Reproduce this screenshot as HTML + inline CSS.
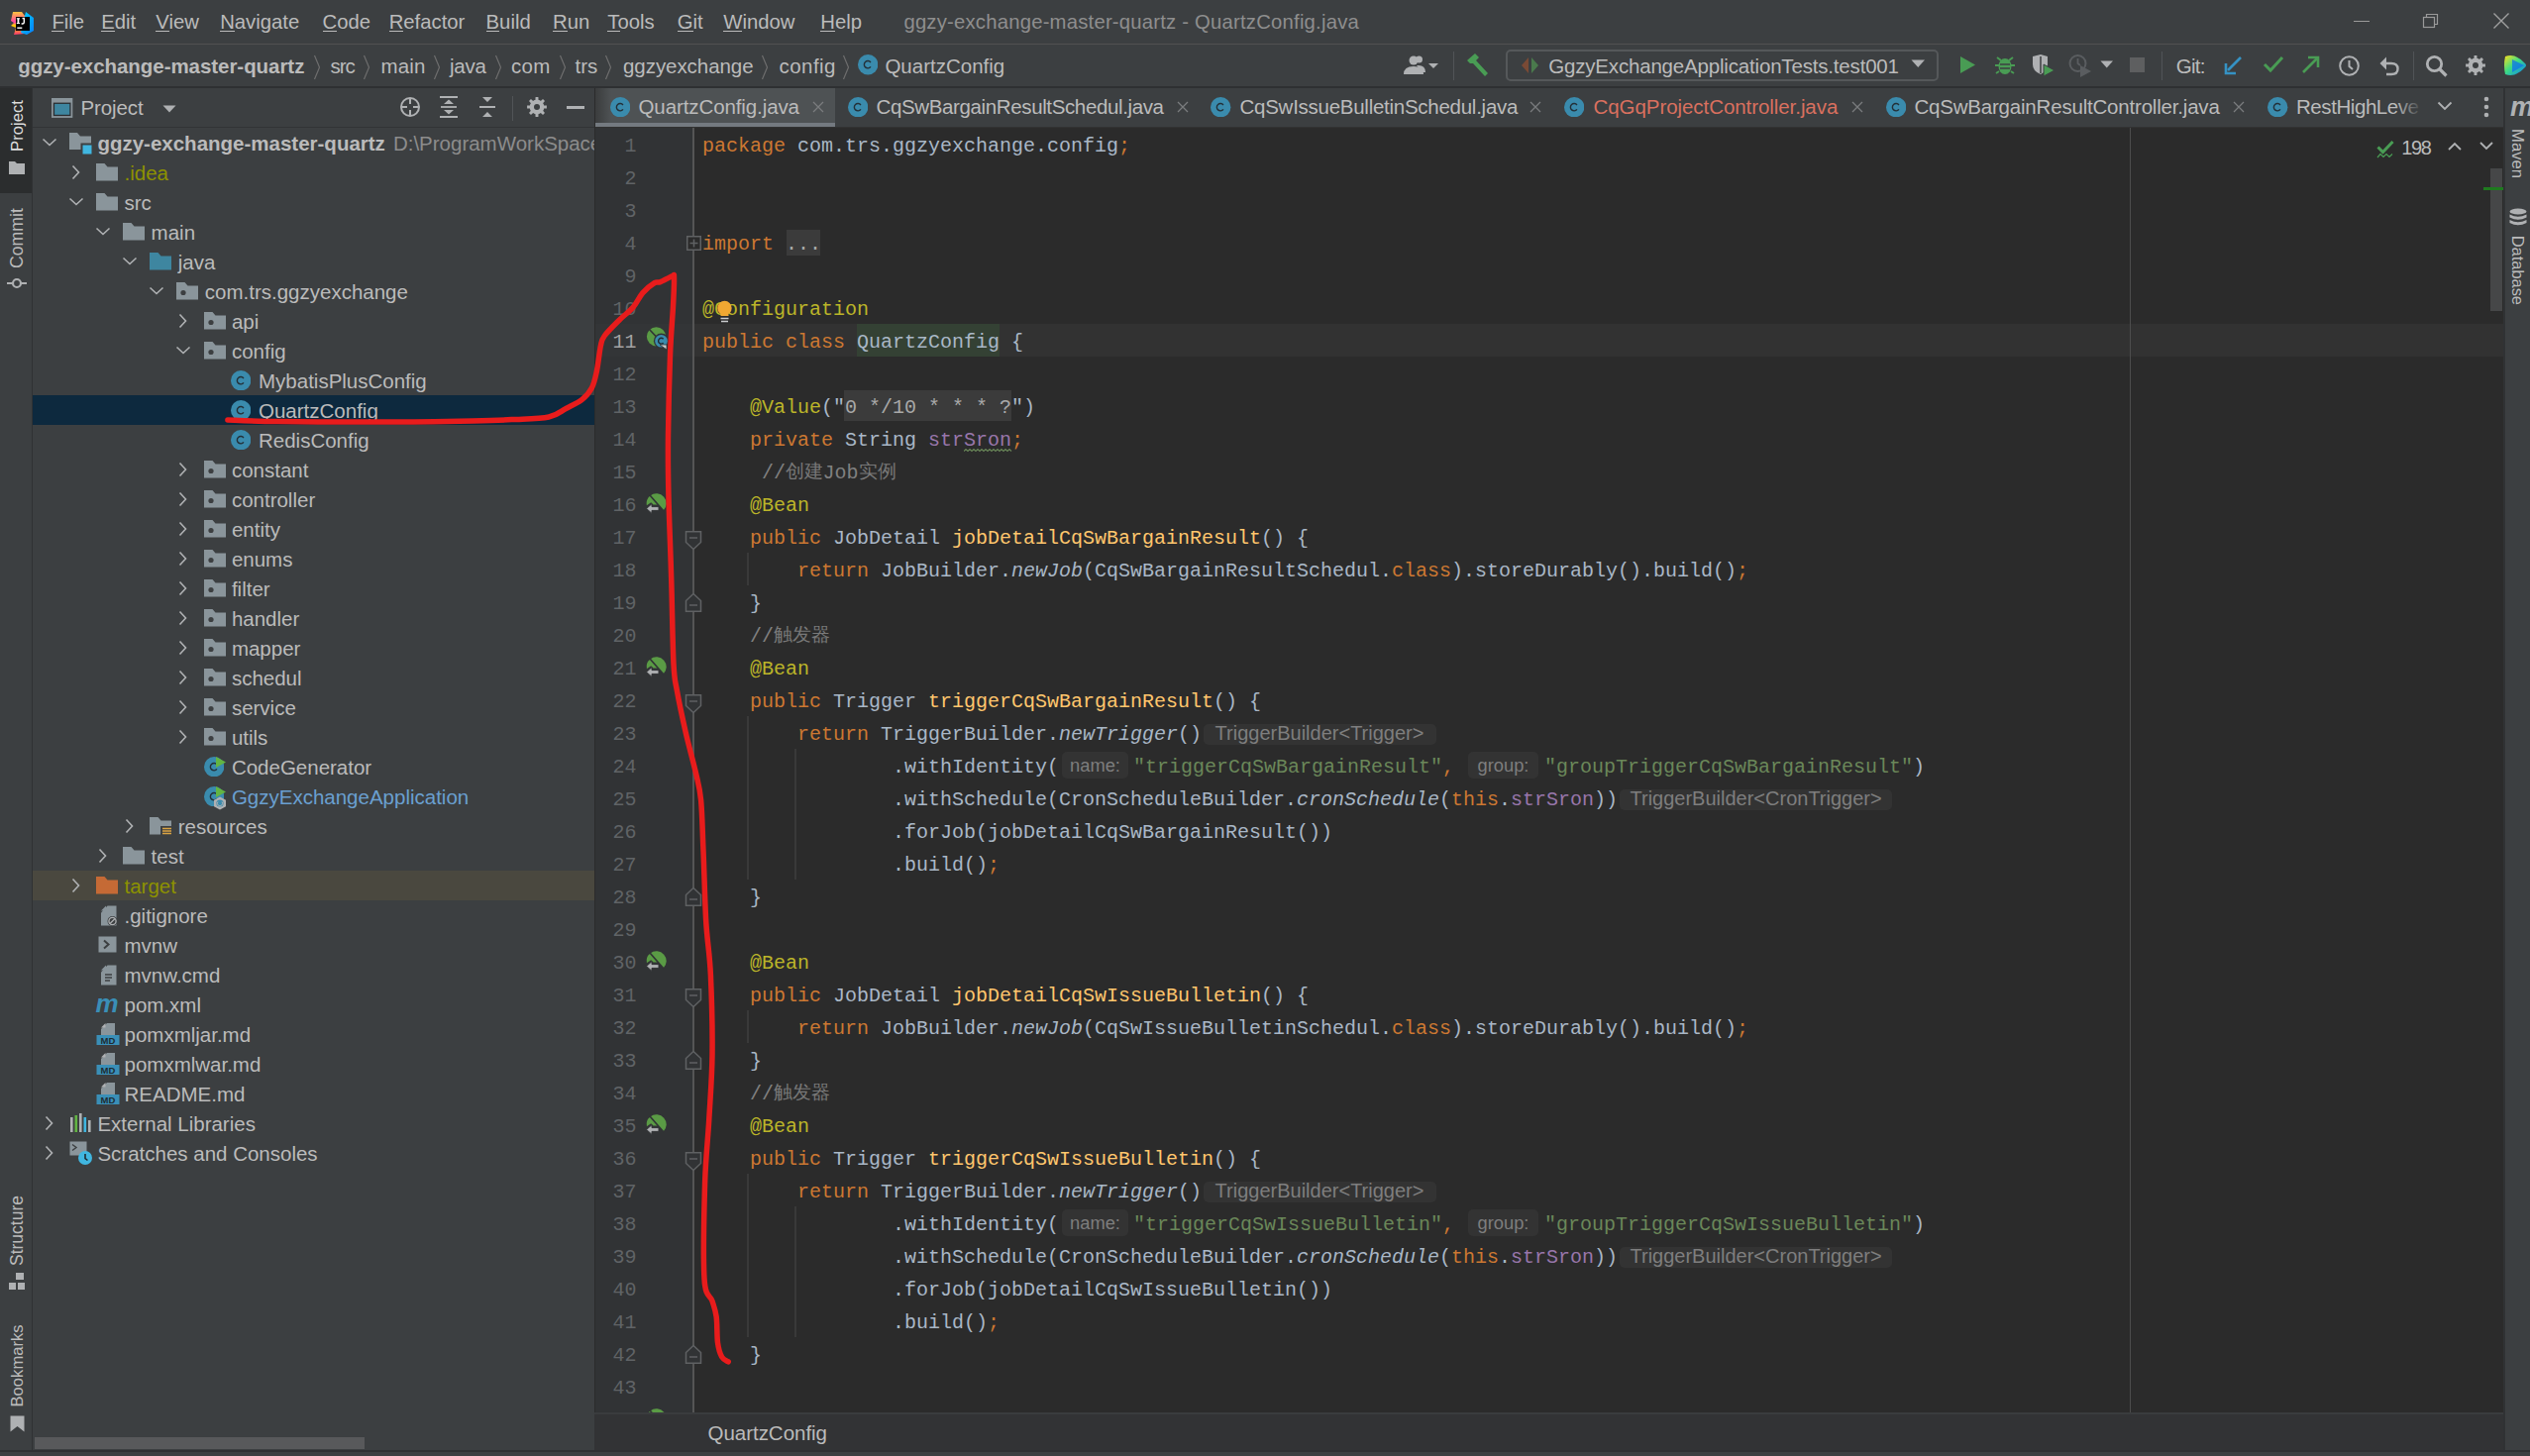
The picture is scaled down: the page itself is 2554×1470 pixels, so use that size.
<!DOCTYPE html><html><head><meta charset="utf-8"><style>
html,body{margin:0;padding:0}
body{width:2554px;height:1470px;position:relative;overflow:hidden;background:#3C3F41;font-family:"Liberation Sans",sans-serif}
.t{position:absolute;white-space:pre;line-height:1;font-family:"Liberation Sans",sans-serif}
.r{position:absolute;display:block}
.m{position:absolute;white-space:pre;line-height:1;font-family:"Liberation Mono",monospace;font-size:20px}
.m i{font-style:italic}
</style></head><body>

<div class="r" style="left:0px;top:0px;width:2554px;height:44px;background:#3C3F41;"></div>
<div class="r" style="left:0px;top:44px;width:2554px;height:1px;background:#515151;"></div>
<svg class="r" style="left:10px;top:10px" width="26" height="26" viewBox="0 0 26 26">
<defs><linearGradient id="lg1" x1="0" y1="0" x2="0" y2="1"><stop offset="0" stop-color="#FFC43D"/><stop offset="0.45" stop-color="#FF3EA5"/><stop offset="0.6" stop-color="#FFD400"/><stop offset="1" stop-color="#FF3873"/></linearGradient>
<linearGradient id="lg2" x1="0" y1="0" x2="1" y2="1"><stop offset="0" stop-color="#00D8FF"/><stop offset="1" stop-color="#087CFA"/></linearGradient></defs>
<polygon points="3,2 12,2 15,6 15,24 4,25 6,18 1,16 4,13 1,11" fill="url(#lg1)"/>
<polygon points="16,2 24,8 24,21 17,25 11,23 15,6" fill="url(#lg2)"/>
<rect x="6" y="7" width="14" height="14" fill="#000"/>
<rect x="7.5" y="8.5" width="1.8" height="5" fill="#fff"/><rect x="6.8" y="8.3" width="3.2" height="1" fill="#fff"/><rect x="6.8" y="13" width="3.2" height="1" fill="#fff"/>
<path d="M12.5 8.5 H14.3 V12.5 Q14.3 14 12.6 14 H11.6" stroke="#fff" stroke-width="1.4" fill="none"/>
<rect x="7.3" y="17.5" width="5" height="1.4" fill="#fff"/>
</svg>
<div class="t" style="left:52.4px;top:12.11px;font-size:20.30px;color:#BBBBBB;">File</div>
<div class="r" style="left:52.4px;top:31px;width:12.4px;height:1px;background:#BBBBBB;"></div>
<div class="t" style="left:102.2px;top:12.11px;font-size:20.30px;color:#BBBBBB;">Edit</div>
<div class="r" style="left:102.2px;top:31px;width:13.5px;height:1px;background:#BBBBBB;"></div>
<div class="t" style="left:157.3px;top:12.11px;font-size:20.30px;color:#BBBBBB;">View</div>
<div class="r" style="left:157.3px;top:31px;width:13.5px;height:1px;background:#BBBBBB;"></div>
<div class="t" style="left:222.2px;top:12.11px;font-size:20.30px;color:#BBBBBB;">Navigate</div>
<div class="r" style="left:222.2px;top:31px;width:14.7px;height:1px;background:#BBBBBB;"></div>
<div class="t" style="left:325.5px;top:12.11px;font-size:20.30px;color:#BBBBBB;">Code</div>
<div class="r" style="left:325.5px;top:31px;width:14.7px;height:1px;background:#BBBBBB;"></div>
<div class="t" style="left:392.7px;top:12.11px;font-size:20.30px;color:#BBBBBB;">Refactor</div>
<div class="r" style="left:392.7px;top:31px;width:14.7px;height:1px;background:#BBBBBB;"></div>
<div class="t" style="left:490.6px;top:12.11px;font-size:20.30px;color:#BBBBBB;">Build</div>
<div class="r" style="left:490.6px;top:31px;width:13.5px;height:1px;background:#BBBBBB;"></div>
<div class="t" style="left:558.0px;top:12.11px;font-size:20.30px;color:#BBBBBB;">Run</div>
<div class="r" style="left:558.0px;top:31px;width:14.7px;height:1px;background:#BBBBBB;"></div>
<div class="t" style="left:613.3px;top:12.11px;font-size:20.30px;color:#BBBBBB;">Tools</div>
<div class="r" style="left:613.3px;top:31px;width:12.4px;height:1px;background:#BBBBBB;"></div>
<div class="t" style="left:683.8px;top:12.11px;font-size:20.30px;color:#BBBBBB;">Git</div>
<div class="r" style="left:683.8px;top:31px;width:15.8px;height:1px;background:#BBBBBB;"></div>
<div class="t" style="left:730.3px;top:12.11px;font-size:20.30px;color:#BBBBBB;">Window</div>
<div class="r" style="left:730.3px;top:31px;width:19.2px;height:1px;background:#BBBBBB;"></div>
<div class="t" style="left:828.3px;top:12.11px;font-size:20.30px;color:#BBBBBB;">Help</div>
<div class="r" style="left:828.3px;top:31px;width:14.7px;height:1px;background:#BBBBBB;"></div>
<div class="t" style="left:912.4px;top:12.11px;font-size:20.30px;color:#8E8E8E;letter-spacing:0.209px;">ggzy-exchange-master-quartz - QuartzConfig.java</div>
<div class="r" style="left:2376px;top:21px;width:16px;height:1.3px;background:#9A9A9A;"></div>
<svg class="r" style="left:2444px;top:12px" width="20" height="18" viewBox="0 0 20 18"><rect x="2.5" y="5.5" width="11" height="10" fill="none" stroke="#9A9A9A" stroke-width="1.2"/><path d="M5.5 5.5 V2.5 H16.5 V12.5 H13.5" fill="none" stroke="#9A9A9A" stroke-width="1.2"/></svg>
<svg class="r" style="left:2516px;top:12px" width="18" height="18" viewBox="0 0 18 18"><path d="M1.5 1.5 L16.5 16.5 M16.5 1.5 L1.5 16.5" stroke="#A0A0A0" stroke-width="1.4"/></svg>
<div class="r" style="left:0px;top:45px;width:2554px;height:42px;background:#3C3F41;"></div>
<div class="r" style="left:0px;top:87px;width:2554px;height:2px;background:#2E3032;"></div>
<div class="t" style="left:18.2px;top:56.64px;font-size:20.50px;color:#BBBBBB;font-weight:bold;letter-spacing:-0.049px;">ggzy-exchange-master-quartz</div>
<div class="t" style="left:333.4px;top:56.64px;font-size:20.50px;color:#BBBBBB;letter-spacing:-1.013px;">src</div>
<div class="t" style="left:384.5px;top:56.64px;font-size:20.50px;color:#BBBBBB;letter-spacing:0.122px;">main</div>
<div class="t" style="left:454.0px;top:56.64px;font-size:20.50px;color:#BBBBBB;letter-spacing:-0.269px;">java</div>
<div class="t" style="left:516.0px;top:56.64px;font-size:20.50px;color:#BBBBBB;letter-spacing:0.286px;">com</div>
<div class="t" style="left:580.6px;top:56.64px;font-size:20.50px;color:#BBBBBB;letter-spacing:-0.036px;">trs</div>
<div class="t" style="left:629.0px;top:56.64px;font-size:20.50px;color:#BBBBBB;letter-spacing:-0.055px;">ggzyexchange</div>
<div class="t" style="left:786.6px;top:56.64px;font-size:20.50px;color:#BBBBBB;letter-spacing:0.439px;">config</div>
<div class="t" style="left:893.4px;top:56.64px;font-size:20.50px;color:#BBBBBB;letter-spacing:0.002px;">QuartzConfig</div>
<svg class="r" style="left:315px;top:55px" width="10" height="26" viewBox="0 0 10 26"><path d="M2.5 1 L7.5 13 L2.5 25" stroke="#6E6E6E" stroke-width="1.2" fill="none"/></svg>
<svg class="r" style="left:365px;top:55px" width="10" height="26" viewBox="0 0 10 26"><path d="M2.5 1 L7.5 13 L2.5 25" stroke="#6E6E6E" stroke-width="1.2" fill="none"/></svg>
<svg class="r" style="left:436px;top:55px" width="10" height="26" viewBox="0 0 10 26"><path d="M2.5 1 L7.5 13 L2.5 25" stroke="#6E6E6E" stroke-width="1.2" fill="none"/></svg>
<svg class="r" style="left:498px;top:55px" width="10" height="26" viewBox="0 0 10 26"><path d="M2.5 1 L7.5 13 L2.5 25" stroke="#6E6E6E" stroke-width="1.2" fill="none"/></svg>
<svg class="r" style="left:563px;top:55px" width="10" height="26" viewBox="0 0 10 26"><path d="M2.5 1 L7.5 13 L2.5 25" stroke="#6E6E6E" stroke-width="1.2" fill="none"/></svg>
<svg class="r" style="left:609px;top:55px" width="10" height="26" viewBox="0 0 10 26"><path d="M2.5 1 L7.5 13 L2.5 25" stroke="#6E6E6E" stroke-width="1.2" fill="none"/></svg>
<svg class="r" style="left:767px;top:55px" width="10" height="26" viewBox="0 0 10 26"><path d="M2.5 1 L7.5 13 L2.5 25" stroke="#6E6E6E" stroke-width="1.2" fill="none"/></svg>
<svg class="r" style="left:849px;top:55px" width="10" height="26" viewBox="0 0 10 26"><path d="M2.5 1 L7.5 13 L2.5 25" stroke="#6E6E6E" stroke-width="1.2" fill="none"/></svg>
<svg class="r" style="left:865.7px;top:55.3px" width="20.4" height="20.4" viewBox="0 0 20.4 20.4"><circle cx="10.20" cy="10.20" r="10.20" fill="#3A8BAD"/><path d="M12.95 7.96 A 3.67 3.67 0 1 0 12.95 12.44" stroke="#233038" stroke-width="1.43" fill="none"/></svg>
<svg class="r" style="left:1414px;top:54px" width="42" height="24" viewBox="0 0 42 24"><circle cx="13" cy="7" r="4.5" fill="#AFB1B3"/><path d="M3 21 Q3 13 13 13 Q23 13 23 21 Z" fill="#AFB1B3"/><circle cx="18.5" cy="6" r="3.5" fill="#AFB1B3"/><path d="M16 12 Q25 11 25 19 H22" fill="#AFB1B3"/><path d="M28 10 H38 L33 15 Z" fill="#AFB1B3"/></svg>
<div class="r" style="left:1467px;top:52px;width:1px;height:29px;background:#515457;"></div>
<svg class="r" style="left:1478px;top:52px" width="26" height="28" viewBox="0 0 26 28"><path d="M3 9 L11 2 L15 6 L12 9 L24 22 L21 25 L9 12 L6 12 Z" fill="#499C54"/></svg>
<div class="r" style="left:1520px;top:50px;width:437px;height:32px;border:2px solid #55585A;border-radius:5px;box-sizing:border-box"></div>
<svg class="r" style="left:1535px;top:57px" width="20" height="18" viewBox="0 0 20 18"><path d="M8 1 L1 9 L8 17 Z" fill="#7A4A35"/><path d="M11 1 L18 9 L11 17 Z" fill="#4A7A4C"/></svg>
<div class="t" style="left:1563.2px;top:56.64px;font-size:20.50px;color:#BBBBBB;letter-spacing:-0.180px;">GgzyExchangeApplicationTests.test001</div>
<svg class="r" style="left:1929px;top:60px" width="15" height="9" viewBox="0 0 15 9"><path d="M0.5 0.5 H14 L7.25 8 Z" fill="#AFB1B3"/></svg>
<svg class="r" style="left:1978px;top:56px" width="17" height="19" viewBox="0 0 17 19"><path d="M1 1 L16 9.5 L1 18 Z" fill="#499C54"/></svg>
<svg class="r" style="left:2013px;top:54px" width="22" height="23" viewBox="0 0 22 23"><ellipse cx="11" cy="13" rx="6.5" ry="8" fill="#499C54"/><path d="M3 4 L7 7 M19 4 L15 7 M1 12 H5 M17 12 H21 M2 20 L5 18 M20 20 L17 18" stroke="#499C54" stroke-width="2"/><path d="M6 11 H16 M6 15 H16" stroke="#3C3F41" stroke-width="1.6"/></svg>
<svg class="r" style="left:2050px;top:54px" width="26" height="24" viewBox="0 0 26 24"><path d="M2 3 L10 1 L17 3 V11 Q17 18 10 21 Q2 18 2 11 Z" fill="#AFB1B3"/><path d="M10 3 V20" stroke="#3C3F41" stroke-width="1.5"/><path d="M13 11 L24 17 L13 23 Z" fill="#499C54" stroke="#3C3F41" stroke-width="1"/></svg>
<svg class="r" style="left:2088px;top:54px" width="24" height="24" viewBox="0 0 24 24"><circle cx="9.5" cy="10" r="8" fill="none" stroke="#5A5D60" stroke-width="2"/><path d="M9.5 5 V10 L12 12" stroke="#5A5D60" stroke-width="1.8" fill="none"/><path d="M12 12 L23 18 L12 24 Z" fill="#5A5D60"/></svg>
<svg class="r" style="left:2120px;top:61px" width="14" height="8" viewBox="0 0 14 8"><path d="M0.5 0.5 H13 L6.75 7.5 Z" fill="#AFB1B3"/></svg>
<div class="r" style="left:2150px;top:58px;width:15px;height:15px;background:#5E5F60;"></div>
<div class="r" style="left:2182px;top:52px;width:1px;height:29px;background:#515457;"></div>
<div class="t" style="left:2196.7px;top:56.64px;font-size:20.50px;color:#BBBBBB;letter-spacing:-0.697px;">Git:</div>
<svg class="r" style="left:2245px;top:56px" width="20" height="20" viewBox="0 0 20 20"><path d="M17 2 L4 15" stroke="#3592C4" stroke-width="2.6"/><path d="M2 8 V18 H12" stroke="#3592C4" stroke-width="2.6" fill="none"/></svg>
<svg class="r" style="left:2284px;top:56px" width="22" height="18" viewBox="0 0 22 18"><path d="M2 9 L8 15 L20 2" stroke="#499C54" stroke-width="3" fill="none"/></svg>
<svg class="r" style="left:2322px;top:55px" width="21" height="20" viewBox="0 0 21 20"><path d="M3 18 L17 4" stroke="#499C54" stroke-width="2.6"/><path d="M8 3 H18 V13" stroke="#499C54" stroke-width="2.6" fill="none"/></svg>
<svg class="r" style="left:2360px;top:55px" width="24" height="23" viewBox="0 0 24 23"><circle cx="11.5" cy="11.5" r="9.3" fill="none" stroke="#AFB1B3" stroke-width="2"/><path d="M11.5 6 V12 L15 15" stroke="#AFB1B3" stroke-width="2" fill="none"/></svg>
<svg class="r" style="left:2400px;top:55px" width="23" height="22" viewBox="0 0 23 22"><path d="M8 9 H14 Q20.5 9 20.5 14.5 Q20.5 20 14 20 H9" stroke="#AFB1B3" stroke-width="2.4" fill="none"/><path d="M9 2.5 L2.5 9 L9 15.5 Z" fill="#AFB1B3"/></svg>
<div class="r" style="left:2436px;top:52px;width:1px;height:29px;background:#515457;"></div>
<svg class="r" style="left:2448px;top:55px" width="24" height="24" viewBox="0 0 24 24"><circle cx="9.5" cy="9.5" r="7.2" fill="none" stroke="#AFB1B3" stroke-width="2.8"/><path d="M14.5 14.5 L21.5 21.5" stroke="#AFB1B3" stroke-width="3.2"/></svg>
<svg class="r" style="left:2489px;top:56px" width="20" height="20" viewBox="0 0 20 20"><polygon points="17.03,8.43 19.90,8.60 19.90,11.40 17.03,11.57 16.08,13.86 17.99,16.02 16.02,17.99 13.86,16.08 11.57,17.03 11.40,19.90 8.60,19.90 8.43,17.03 6.14,16.08 3.98,17.99 2.01,16.02 3.92,13.86 2.97,11.57 0.10,11.40 0.10,8.60 2.97,8.43 3.92,6.14 2.01,3.98 3.98,2.01 6.14,3.92 8.43,2.97 8.60,0.10 11.40,0.10 11.57,2.97 13.86,3.92 16.02,2.01 17.99,3.98 16.08,6.14" fill="#AFB1B3"/><circle cx="10.00" cy="10.00" r="7.20" fill="#AFB1B3"/><circle cx="10.00" cy="10.00" r="3.00" fill="#3C3F41"/></svg>
<svg class="r" style="left:2527px;top:54px" width="24" height="25" viewBox="0 0 24 25"><defs><linearGradient id="cw" x1="0" y1="0" x2="1" y2="1"><stop offset="0" stop-color="#FFE01B"/><stop offset="0.45" stop-color="#3DDC84"/><stop offset="1" stop-color="#087CFA"/></linearGradient></defs><path d="M2 3 Q12 -1 22 10 Q24 12 22 14 Q12 25 2 21 Q0 12 2 3 Z" fill="url(#cw)"/><path d="M9 6 L21 12 L9 19 Z" fill="#0B6CF0" opacity="0.7"/></svg>
<div class="r" style="left:0px;top:89px;width:32px;height:1376px;background:#3C3F41;"></div>
<div class="r" style="left:0px;top:89px;width:32px;height:106px;background:#2B2D2E;"></div>
<div class="r" style="left:32px;top:89px;width:1px;height:1376px;background:#2F3133;"></div>
<div class="t" style="left:-8.5px;top:117.0px;width:52.0px;height:20.0px;font-size:16.71px;color:#DDDDDD;line-height:20.0px;text-align:center;transform:rotate(-90deg);transform-origin:50% 50%">Project</div>
<svg class="r" style="left:8px;top:160px" width="18" height="18" viewBox="0 0 18 18"><path d="M1 3 H7 L9 5 H17 V16 H1 Z" fill="#AFB1B3"/></svg>
<div class="t" style="left:-13.0px;top:229.9px;width:61.0px;height:21.3px;font-size:17.71px;color:#BBBBBB;line-height:21.3px;text-align:center;transform:rotate(-90deg);transform-origin:50% 50%">Commit</div>
<svg class="r" style="left:7px;top:279px" width="20" height="14" viewBox="0 0 20 14"><circle cx="10" cy="7" r="4" fill="none" stroke="#AFB1B3" stroke-width="2.2"/><path d="M0 7 H5.5 M14.5 7 H20" stroke="#AFB1B3" stroke-width="2.2"/></svg>
<div class="t" style="left:-18.0px;top:1232.0px;width:71.0px;height:21.0px;font-size:17.50px;color:#BBBBBB;line-height:21.0px;text-align:center;transform:rotate(-90deg);transform-origin:50% 50%">Structure</div>
<svg class="r" style="left:8px;top:1284px" width="18" height="20" viewBox="0 0 18 20"><rect x="8" y="1" width="8" height="7" fill="#AFB1B3"/><rect x="1" y="11" width="7" height="7" fill="#AFB1B3"/><rect x="10" y="11" width="7" height="7" fill="#AFB1B3"/></svg>
<div class="t" style="left:-24.0px;top:1368.5px;width:83.0px;height:19.9px;font-size:16.60px;color:#BBBBBB;line-height:19.9px;text-align:center;transform:rotate(-90deg);transform-origin:50% 50%">Bookmarks</div>
<svg class="r" style="left:10px;top:1429px" width="15" height="17" viewBox="0 0 15 17"><path d="M0.5 0.5 H14.5 V16.5 L7.5 11 L0.5 16.5 Z" fill="#AFB1B3"/></svg>
<div class="r" style="left:33px;top:89px;width:567px;height:1376px;background:#3C3F41;"></div>
<div class="r" style="left:33px;top:128px;width:567px;height:1px;background:#323436;"></div>
<svg class="r" style="left:52px;top:99px" width="22" height="20" viewBox="0 0 22 20"><rect x="0" y="0" width="21.3" height="19.9" fill="#8A959B"/><rect x="1.8" y="4.6" width="17.7" height="13.5" fill="#2B2D30"/><rect x="3.1" y="5.9" width="15.2" height="10.9" fill="#3E86A0"/></svg>
<div class="t" style="left:81.5px;top:99.04px;font-size:20.50px;color:#BBBBBB;letter-spacing:-0.100px;">Project</div>
<svg class="r" style="left:164px;top:106px" width="14" height="8" viewBox="0 0 14 8"><path d="M0.5 0.5 H13.5 L7 7.5 Z" fill="#AFB1B3"/></svg>
<svg class="r" style="left:403px;top:97px" width="22" height="22" viewBox="0 0 22 22"><circle cx="11" cy="11" r="9" fill="none" stroke="#AFB1B3" stroke-width="2"/><path d="M11 2 V8 M11 14 V20 M2 11 H8 M14 11 H20" stroke="#AFB1B3" stroke-width="2"/></svg>
<svg class="r" style="left:444px;top:97px" width="18" height="22" viewBox="0 0 18 22"><path d="M0 1 H18 M0 21 H18" stroke="#AFB1B3" stroke-width="2"/><path d="M4 8 L9 3.5 L14 8 Z M4 14 L9 18.5 L14 14 Z" fill="#AFB1B3"/><path d="M1 11 H17" stroke="#AFB1B3" stroke-width="1.8"/></svg>
<svg class="r" style="left:483px;top:97px" width="18" height="22" viewBox="0 0 18 22"><path d="M1 11 H17" stroke="#AFB1B3" stroke-width="2"/><path d="M4 1 L9 6 L14 1 Z M4 21 L9 16 L14 21 Z" fill="#AFB1B3"/></svg>
<div class="r" style="left:517px;top:97px;width:1px;height:25px;background:#515457;"></div>
<svg class="r" style="left:532px;top:98px" width="20" height="20" viewBox="0 0 20 20"><polygon points="17.03,8.43 19.90,8.60 19.90,11.40 17.03,11.57 16.08,13.86 17.99,16.02 16.02,17.99 13.86,16.08 11.57,17.03 11.40,19.90 8.60,19.90 8.43,17.03 6.14,16.08 3.98,17.99 2.01,16.02 3.92,13.86 2.97,11.57 0.10,11.40 0.10,8.60 2.97,8.43 3.92,6.14 2.01,3.98 3.98,2.01 6.14,3.92 8.43,2.97 8.60,0.10 11.40,0.10 11.57,2.97 13.86,3.92 16.02,2.01 17.99,3.98 16.08,6.14" fill="#AFB1B3"/><circle cx="10.00" cy="10.00" r="7.20" fill="#AFB1B3"/><circle cx="10.00" cy="10.00" r="3.00" fill="#3C3F41"/></svg>
<div class="r" style="left:572px;top:107px;width:18px;height:3px;background:#AFB1B3;"></div>
<div class="r" style="left:33px;top:399px;width:567px;height:30px;background:#0D293E;"></div>
<div class="r" style="left:33px;top:879px;width:567px;height:30px;background:#4A483F;"></div>
<svg class="r" style="left:42px;top:139px" width="16" height="10" viewBox="0 0 16 10"><path d="M1.5 1.5 L8 7.5 L14.5 1.5" stroke="#AFB1B3" stroke-width="1.6" fill="none"/></svg>
<svg class="r" style="left:70px;top:134px" width="24" height="22" viewBox="0 0 24 22"><path d="M0 0 H8 L11 3.5 H22 V17 H0 Z" fill="#8A959B"/><rect x="11.5" y="10.5" width="11" height="11" fill="#3C3F41"/><rect x="13.5" y="12.5" width="9" height="9" fill="#40B6E0"/></svg>
<div class="t" style="left:98.4px;top:134.64px;font-size:20.50px;color:#BBBBBB;font-weight:bold;">ggzy-exchange-master-quartz</div>
<div class="t" style="left:396.9px;top:134.64px;font-size:20.50px;color:#8C8C8C;">D:\ProgramWorkSpace\ggzy</div>
<svg class="r" style="left:72px;top:166px" width="10" height="16" viewBox="0 0 10 16"><path d="M1.5 1.5 L7.5 8 L1.5 14.5" stroke="#AFB1B3" stroke-width="1.6" fill="none"/></svg>
<svg class="r" style="left:97px;top:165px" width="22" height="18" viewBox="0 0 22 18"><path d="M0 0 H8.5 L11.5 3.5 H22 V17.5 H0 Z" fill="#8A959B"/></svg>
<div class="t" style="left:125.5px;top:164.64px;font-size:20.50px;color:#8D9200;">.idea</div>
<svg class="r" style="left:69px;top:199px" width="16" height="10" viewBox="0 0 16 10"><path d="M1.5 1.5 L8 7.5 L14.5 1.5" stroke="#AFB1B3" stroke-width="1.6" fill="none"/></svg>
<svg class="r" style="left:97px;top:195px" width="22" height="18" viewBox="0 0 22 18"><path d="M0 0 H8.5 L11.5 3.5 H22 V17.5 H0 Z" fill="#8A959B"/></svg>
<div class="t" style="left:125.5px;top:194.64px;font-size:20.50px;color:#BBBBBB;">src</div>
<svg class="r" style="left:96px;top:229px" width="16" height="10" viewBox="0 0 16 10"><path d="M1.5 1.5 L8 7.5 L14.5 1.5" stroke="#AFB1B3" stroke-width="1.6" fill="none"/></svg>
<svg class="r" style="left:124px;top:225px" width="22" height="18" viewBox="0 0 22 18"><path d="M0 0 H8.5 L11.5 3.5 H22 V17.5 H0 Z" fill="#8A959B"/></svg>
<div class="t" style="left:152.6px;top:224.64px;font-size:20.50px;color:#BBBBBB;">main</div>
<svg class="r" style="left:123px;top:259px" width="16" height="10" viewBox="0 0 16 10"><path d="M1.5 1.5 L8 7.5 L14.5 1.5" stroke="#AFB1B3" stroke-width="1.6" fill="none"/></svg>
<svg class="r" style="left:151px;top:255px" width="22" height="18" viewBox="0 0 22 18"><path d="M0 0 H8.5 L11.5 3.5 H22 V17.5 H0 Z" fill="#3E86A0"/></svg>
<div class="t" style="left:179.7px;top:254.64px;font-size:20.50px;color:#BBBBBB;">java</div>
<svg class="r" style="left:150px;top:289px" width="16" height="10" viewBox="0 0 16 10"><path d="M1.5 1.5 L8 7.5 L14.5 1.5" stroke="#AFB1B3" stroke-width="1.6" fill="none"/></svg>
<svg class="r" style="left:178px;top:285px" width="22" height="18" viewBox="0 0 22 18"><path d="M0 0 H8.5 L11.5 3.5 H22 V17.5 H0 Z" fill="#8A959B"/><circle cx="7" cy="10.5" r="2.6" fill="#3C3F41"/></svg>
<div class="t" style="left:206.8px;top:284.64px;font-size:20.50px;color:#BBBBBB;">com.trs.ggzyexchange</div>
<svg class="r" style="left:180px;top:316px" width="10" height="16" viewBox="0 0 10 16"><path d="M1.5 1.5 L7.5 8 L1.5 14.5" stroke="#AFB1B3" stroke-width="1.6" fill="none"/></svg>
<svg class="r" style="left:206px;top:315px" width="22" height="18" viewBox="0 0 22 18"><path d="M0 0 H8.5 L11.5 3.5 H22 V17.5 H0 Z" fill="#8A959B"/><circle cx="7" cy="10.5" r="2.6" fill="#3C3F41"/></svg>
<div class="t" style="left:233.9px;top:314.64px;font-size:20.50px;color:#BBBBBB;">api</div>
<svg class="r" style="left:177px;top:349px" width="16" height="10" viewBox="0 0 16 10"><path d="M1.5 1.5 L8 7.5 L14.5 1.5" stroke="#AFB1B3" stroke-width="1.6" fill="none"/></svg>
<svg class="r" style="left:206px;top:345px" width="22" height="18" viewBox="0 0 22 18"><path d="M0 0 H8.5 L11.5 3.5 H22 V17.5 H0 Z" fill="#8A959B"/><circle cx="7" cy="10.5" r="2.6" fill="#3C3F41"/></svg>
<div class="t" style="left:233.9px;top:344.64px;font-size:20.50px;color:#BBBBBB;">config</div>
<svg class="r" style="left:232.8px;top:373.8px" width="20.4" height="20.4" viewBox="0 0 20.4 20.4"><circle cx="10.20" cy="10.20" r="10.20" fill="#3A8BAD"/><path d="M12.95 7.96 A 3.67 3.67 0 1 0 12.95 12.44" stroke="#233038" stroke-width="1.43" fill="none"/></svg>
<div class="t" style="left:261.0px;top:374.64px;font-size:20.50px;color:#BBBBBB;">MybatisPlusConfig</div>
<svg class="r" style="left:232.8px;top:403.8px" width="20.4" height="20.4" viewBox="0 0 20.4 20.4"><circle cx="10.20" cy="10.20" r="10.20" fill="#3A8BAD"/><path d="M12.95 7.96 A 3.67 3.67 0 1 0 12.95 12.44" stroke="#233038" stroke-width="1.43" fill="none"/></svg>
<div class="t" style="left:261.0px;top:404.64px;font-size:20.50px;color:#BBBBBB;">QuartzConfig</div>
<svg class="r" style="left:232.8px;top:433.8px" width="20.4" height="20.4" viewBox="0 0 20.4 20.4"><circle cx="10.20" cy="10.20" r="10.20" fill="#3A8BAD"/><path d="M12.95 7.96 A 3.67 3.67 0 1 0 12.95 12.44" stroke="#233038" stroke-width="1.43" fill="none"/></svg>
<div class="t" style="left:261.0px;top:434.64px;font-size:20.50px;color:#BBBBBB;">RedisConfig</div>
<svg class="r" style="left:180px;top:466px" width="10" height="16" viewBox="0 0 10 16"><path d="M1.5 1.5 L7.5 8 L1.5 14.5" stroke="#AFB1B3" stroke-width="1.6" fill="none"/></svg>
<svg class="r" style="left:206px;top:465px" width="22" height="18" viewBox="0 0 22 18"><path d="M0 0 H8.5 L11.5 3.5 H22 V17.5 H0 Z" fill="#8A959B"/><circle cx="7" cy="10.5" r="2.6" fill="#3C3F41"/></svg>
<div class="t" style="left:233.9px;top:464.64px;font-size:20.50px;color:#BBBBBB;">constant</div>
<svg class="r" style="left:180px;top:496px" width="10" height="16" viewBox="0 0 10 16"><path d="M1.5 1.5 L7.5 8 L1.5 14.5" stroke="#AFB1B3" stroke-width="1.6" fill="none"/></svg>
<svg class="r" style="left:206px;top:495px" width="22" height="18" viewBox="0 0 22 18"><path d="M0 0 H8.5 L11.5 3.5 H22 V17.5 H0 Z" fill="#8A959B"/><circle cx="7" cy="10.5" r="2.6" fill="#3C3F41"/></svg>
<div class="t" style="left:233.9px;top:494.64px;font-size:20.50px;color:#BBBBBB;">controller</div>
<svg class="r" style="left:180px;top:526px" width="10" height="16" viewBox="0 0 10 16"><path d="M1.5 1.5 L7.5 8 L1.5 14.5" stroke="#AFB1B3" stroke-width="1.6" fill="none"/></svg>
<svg class="r" style="left:206px;top:525px" width="22" height="18" viewBox="0 0 22 18"><path d="M0 0 H8.5 L11.5 3.5 H22 V17.5 H0 Z" fill="#8A959B"/><circle cx="7" cy="10.5" r="2.6" fill="#3C3F41"/></svg>
<div class="t" style="left:233.9px;top:524.64px;font-size:20.50px;color:#BBBBBB;">entity</div>
<svg class="r" style="left:180px;top:556px" width="10" height="16" viewBox="0 0 10 16"><path d="M1.5 1.5 L7.5 8 L1.5 14.5" stroke="#AFB1B3" stroke-width="1.6" fill="none"/></svg>
<svg class="r" style="left:206px;top:555px" width="22" height="18" viewBox="0 0 22 18"><path d="M0 0 H8.5 L11.5 3.5 H22 V17.5 H0 Z" fill="#8A959B"/><circle cx="7" cy="10.5" r="2.6" fill="#3C3F41"/></svg>
<div class="t" style="left:233.9px;top:554.64px;font-size:20.50px;color:#BBBBBB;">enums</div>
<svg class="r" style="left:180px;top:586px" width="10" height="16" viewBox="0 0 10 16"><path d="M1.5 1.5 L7.5 8 L1.5 14.5" stroke="#AFB1B3" stroke-width="1.6" fill="none"/></svg>
<svg class="r" style="left:206px;top:585px" width="22" height="18" viewBox="0 0 22 18"><path d="M0 0 H8.5 L11.5 3.5 H22 V17.5 H0 Z" fill="#8A959B"/><circle cx="7" cy="10.5" r="2.6" fill="#3C3F41"/></svg>
<div class="t" style="left:233.9px;top:584.64px;font-size:20.50px;color:#BBBBBB;">filter</div>
<svg class="r" style="left:180px;top:616px" width="10" height="16" viewBox="0 0 10 16"><path d="M1.5 1.5 L7.5 8 L1.5 14.5" stroke="#AFB1B3" stroke-width="1.6" fill="none"/></svg>
<svg class="r" style="left:206px;top:615px" width="22" height="18" viewBox="0 0 22 18"><path d="M0 0 H8.5 L11.5 3.5 H22 V17.5 H0 Z" fill="#8A959B"/><circle cx="7" cy="10.5" r="2.6" fill="#3C3F41"/></svg>
<div class="t" style="left:233.9px;top:614.64px;font-size:20.50px;color:#BBBBBB;">handler</div>
<svg class="r" style="left:180px;top:646px" width="10" height="16" viewBox="0 0 10 16"><path d="M1.5 1.5 L7.5 8 L1.5 14.5" stroke="#AFB1B3" stroke-width="1.6" fill="none"/></svg>
<svg class="r" style="left:206px;top:645px" width="22" height="18" viewBox="0 0 22 18"><path d="M0 0 H8.5 L11.5 3.5 H22 V17.5 H0 Z" fill="#8A959B"/><circle cx="7" cy="10.5" r="2.6" fill="#3C3F41"/></svg>
<div class="t" style="left:233.9px;top:644.64px;font-size:20.50px;color:#BBBBBB;">mapper</div>
<svg class="r" style="left:180px;top:676px" width="10" height="16" viewBox="0 0 10 16"><path d="M1.5 1.5 L7.5 8 L1.5 14.5" stroke="#AFB1B3" stroke-width="1.6" fill="none"/></svg>
<svg class="r" style="left:206px;top:675px" width="22" height="18" viewBox="0 0 22 18"><path d="M0 0 H8.5 L11.5 3.5 H22 V17.5 H0 Z" fill="#8A959B"/><circle cx="7" cy="10.5" r="2.6" fill="#3C3F41"/></svg>
<div class="t" style="left:233.9px;top:674.64px;font-size:20.50px;color:#BBBBBB;">schedul</div>
<svg class="r" style="left:180px;top:706px" width="10" height="16" viewBox="0 0 10 16"><path d="M1.5 1.5 L7.5 8 L1.5 14.5" stroke="#AFB1B3" stroke-width="1.6" fill="none"/></svg>
<svg class="r" style="left:206px;top:705px" width="22" height="18" viewBox="0 0 22 18"><path d="M0 0 H8.5 L11.5 3.5 H22 V17.5 H0 Z" fill="#8A959B"/><circle cx="7" cy="10.5" r="2.6" fill="#3C3F41"/></svg>
<div class="t" style="left:233.9px;top:704.64px;font-size:20.50px;color:#BBBBBB;">service</div>
<svg class="r" style="left:180px;top:736px" width="10" height="16" viewBox="0 0 10 16"><path d="M1.5 1.5 L7.5 8 L1.5 14.5" stroke="#AFB1B3" stroke-width="1.6" fill="none"/></svg>
<svg class="r" style="left:206px;top:735px" width="22" height="18" viewBox="0 0 22 18"><path d="M0 0 H8.5 L11.5 3.5 H22 V17.5 H0 Z" fill="#8A959B"/><circle cx="7" cy="10.5" r="2.6" fill="#3C3F41"/></svg>
<div class="t" style="left:233.9px;top:734.64px;font-size:20.50px;color:#BBBBBB;">utils</div>
<svg class="r" style="left:205.8px;top:763.8px" width="20.4" height="20.4" viewBox="0 0 20.4 20.4"><circle cx="10.20" cy="10.20" r="10.20" fill="#3A8BAD"/><path d="M12.95 7.96 A 3.67 3.67 0 1 0 12.95 12.44" stroke="#233038" stroke-width="1.43" fill="none"/></svg>
<svg class="r" style="left:217px;top:763px" width="12" height="13" viewBox="0 0 12 13"><path d="M1 1 L11 6.5 L1 12 Z" fill="#62B543"/></svg>
<div class="t" style="left:233.9px;top:764.64px;font-size:20.50px;color:#BBBBBB;">CodeGenerator</div>
<svg class="r" style="left:205.8px;top:793.8px" width="20.4" height="20.4" viewBox="0 0 20.4 20.4"><circle cx="10.20" cy="10.20" r="10.20" fill="#3A8BAD"/><path d="M12.95 7.96 A 3.67 3.67 0 1 0 12.95 12.44" stroke="#233038" stroke-width="1.43" fill="none"/></svg>
<svg class="r" style="left:217px;top:793px" width="12" height="13" viewBox="0 0 12 13"><path d="M1 1 L11 6.5 L1 12 Z" fill="#62B543"/></svg>
<svg class="r" style="left:215px;top:804px" width="14" height="14" viewBox="0 0 14 14"><polygon points="7,0.5 13,3.8 13,10.2 7,13.5 1,10.2 1,3.8" fill="#AFB1B3"/><circle cx="7" cy="7" r="3.6" fill="#3A8BAD"/><path d="M5 5.5 A2.6 2.6 0 1 0 9 5.5" stroke="#AFB1B3" stroke-width="1" fill="none"/></svg>
<div class="t" style="left:233.9px;top:794.64px;font-size:20.50px;color:#6A9FD0;">GgzyExchangeApplication</div>
<svg class="r" style="left:126px;top:826px" width="10" height="16" viewBox="0 0 10 16"><path d="M1.5 1.5 L7.5 8 L1.5 14.5" stroke="#AFB1B3" stroke-width="1.6" fill="none"/></svg>
<svg class="r" style="left:151px;top:825px" width="22" height="18" viewBox="0 0 22 18"><path d="M0 0 H8.5 L11.5 3.5 H22 V17.5 H0 Z" fill="#8A959B"/><rect x="11" y="9" width="11" height="9" fill="#3C3F41"/><path d="M13 11.5 H22 M13 14 H22 M13 16.5 H22" stroke="#D9A343" stroke-width="1.3"/></svg>
<div class="t" style="left:179.7px;top:824.64px;font-size:20.50px;color:#BBBBBB;">resources</div>
<svg class="r" style="left:99px;top:856px" width="10" height="16" viewBox="0 0 10 16"><path d="M1.5 1.5 L7.5 8 L1.5 14.5" stroke="#AFB1B3" stroke-width="1.6" fill="none"/></svg>
<svg class="r" style="left:124px;top:855px" width="22" height="18" viewBox="0 0 22 18"><path d="M0 0 H8.5 L11.5 3.5 H22 V17.5 H0 Z" fill="#8A959B"/></svg>
<div class="t" style="left:152.6px;top:854.64px;font-size:20.50px;color:#BBBBBB;">test</div>
<svg class="r" style="left:72px;top:886px" width="10" height="16" viewBox="0 0 10 16"><path d="M1.5 1.5 L7.5 8 L1.5 14.5" stroke="#AFB1B3" stroke-width="1.6" fill="none"/></svg>
<svg class="r" style="left:97px;top:885px" width="22" height="18" viewBox="0 0 22 18"><path d="M0 0 H8.5 L11.5 3.5 H22 V17.5 H0 Z" fill="#C56A35"/></svg>
<div class="t" style="left:125.5px;top:884.64px;font-size:20.50px;color:#8D9200;">target</div>
<svg class="r" style="left:97.5px;top:913px" width="22" height="22" viewBox="0 0 22 22"><path d="M4 8.5 L10.5 1.5 H19.5 V21.5 H4 Z" fill="#8A959B"/><path d="M4 6.5 L9 1.5 V6.5 Z" fill="#8A959B"/><circle cx="15.5" cy="17" r="5" fill="#3C3F41"/><circle cx="15.5" cy="17" r="3.6" fill="none" stroke="#AFB1B3" stroke-width="1.3"/><path d="M13 19.5 L18 14.5" stroke="#AFB1B3" stroke-width="1.3"/></svg>
<div class="t" style="left:125.5px;top:914.64px;font-size:20.50px;color:#BBBBBB;">.gitignore</div>
<svg class="r" style="left:98.5px;top:945px" width="20" height="18" viewBox="0 0 20 18"><rect x="0.5" y="0.5" width="18" height="16" fill="#8A959B"/><path d="M6 4.5 L10.5 8.5 L6 12.5" stroke="#3C3F41" stroke-width="2" fill="none"/></svg>
<div class="t" style="left:125.5px;top:944.64px;font-size:20.50px;color:#BBBBBB;">mvnw</div>
<svg class="r" style="left:97.5px;top:973px" width="22" height="22" viewBox="0 0 22 22"><path d="M4 8.5 L10.5 1.5 H19.5 V21.5 H4 Z" fill="#8A959B"/><path d="M4 6.5 L9 1.5 V6.5 Z" fill="#8A959B"/><path d="M8 11 H15 M8 14 H15 M8 17 H13" stroke="#3C3F41" stroke-width="1.3"/></svg>
<div class="t" style="left:125.5px;top:974.64px;font-size:20.50px;color:#BBBBBB;">mvnw.cmd</div>
<div class="t" style="left:96.5px;top:1000.0px;font-size:26px;font-weight:bold;font-style:italic;color:#3A8FB7;letter-spacing:-1px">m</div>
<div class="t" style="left:125.5px;top:1004.64px;font-size:20.50px;color:#BBBBBB;">pom.xml</div>
<svg class="r" style="left:96.5px;top:1032px" width="24" height="24" viewBox="0 0 24 24"><path d="M5 7 L11 1 H19 V13 H5 Z" fill="#8A959B"/><path d="M5 5.5 L9.5 1 V5.5 Z" fill="#AFB1B3"/><rect x="0.5" y="13" width="23" height="10" fill="#3A8FB7"/><text x="12" y="21.5" font-family="Liberation Sans" font-size="9.5" font-weight="bold" fill="#1E2C33" text-anchor="middle">MD</text></svg>
<div class="t" style="left:125.5px;top:1034.64px;font-size:20.50px;color:#BBBBBB;">pomxmljar.md</div>
<svg class="r" style="left:96.5px;top:1062px" width="24" height="24" viewBox="0 0 24 24"><path d="M5 7 L11 1 H19 V13 H5 Z" fill="#8A959B"/><path d="M5 5.5 L9.5 1 V5.5 Z" fill="#AFB1B3"/><rect x="0.5" y="13" width="23" height="10" fill="#3A8FB7"/><text x="12" y="21.5" font-family="Liberation Sans" font-size="9.5" font-weight="bold" fill="#1E2C33" text-anchor="middle">MD</text></svg>
<div class="t" style="left:125.5px;top:1064.64px;font-size:20.50px;color:#BBBBBB;">pomxmlwar.md</div>
<svg class="r" style="left:96.5px;top:1092px" width="24" height="24" viewBox="0 0 24 24"><path d="M5 7 L11 1 H19 V13 H5 Z" fill="#8A959B"/><path d="M5 5.5 L9.5 1 V5.5 Z" fill="#AFB1B3"/><rect x="0.5" y="13" width="23" height="10" fill="#3A8FB7"/><text x="12" y="21.5" font-family="Liberation Sans" font-size="9.5" font-weight="bold" fill="#1E2C33" text-anchor="middle">MD</text></svg>
<div class="t" style="left:125.5px;top:1094.64px;font-size:20.50px;color:#BBBBBB;">README.md</div>
<svg class="r" style="left:45px;top:1126px" width="10" height="16" viewBox="0 0 10 16"><path d="M1.5 1.5 L7.5 8 L1.5 14.5" stroke="#AFB1B3" stroke-width="1.6" fill="none"/></svg>
<svg class="r" style="left:70px;top:1124px" width="22" height="20" viewBox="0 0 22 20"><rect x="1" y="4" width="2.6" height="15" fill="#AFB1B3"/><rect x="5.5" y="2" width="2.6" height="17" fill="#62B543"/><rect x="10" y="0" width="2.6" height="19" fill="#AFB1B3"/><rect x="14.5" y="4" width="2.6" height="15" fill="#40B6E0"/><rect x="19" y="7" width="2.6" height="12" fill="#AFB1B3"/></svg>
<div class="t" style="left:98.4px;top:1124.64px;font-size:20.50px;color:#BBBBBB;">External Libraries</div>
<svg class="r" style="left:45px;top:1156px" width="10" height="16" viewBox="0 0 10 16"><path d="M1.5 1.5 L7.5 8 L1.5 14.5" stroke="#AFB1B3" stroke-width="1.6" fill="none"/></svg>
<svg class="r" style="left:70px;top:1152px" width="24" height="25" viewBox="0 0 24 25"><rect x="0.5" y="0.5" width="17" height="14" fill="#8A959B"/><path d="M3 3.5 L7 6.5 L3 9.5" stroke="#3C3F41" stroke-width="1.4" fill="none"/><circle cx="16" cy="17" r="7" fill="#40B6E0"/><path d="M16 13 V17.5 L18.5 19.5" stroke="#1E2C33" stroke-width="1.6" fill="none"/></svg>
<div class="t" style="left:98.4px;top:1154.64px;font-size:20.50px;color:#BBBBBB;">Scratches and Consoles</div>
<div class="r" style="left:35px;top:1451px;width:333px;height:12px;background:#58595B;"></div>
<div class="r" style="left:0px;top:1464px;width:2554px;height:2px;background:#2F3032;"></div>
<div class="r" style="left:0px;top:1466px;width:2554px;height:4px;background:#3C3F41;"></div>
<div class="r" style="left:600px;top:89px;width:1927px;height:40px;background:#3C3F41;"></div>
<div class="r" style="left:600px;top:128px;width:1927px;height:1px;background:#323232;"></div>
<div class="r" style="left:600px;top:89px;width:1px;height:40px;background:#2B2B2B;"></div>
<div class="r" style="left:601px;top:89px;width:242px;height:35px;background:#4E5254;"></div>
<div class="r" style="left:601px;top:89px;width:16px;height:35px;background:linear-gradient(to right,rgba(43,43,43,0.55),rgba(78,82,84,0))"></div>
<div class="r" style="left:601px;top:124px;width:242px;height:4px;background:#747A80;"></div>
<svg class="r" style="left:615.8px;top:97.8px" width="20.4" height="20.4" viewBox="0 0 20.4 20.4"><circle cx="10.20" cy="10.20" r="10.20" fill="#3A8BAD"/><path d="M12.95 7.96 A 3.67 3.67 0 1 0 12.95 12.44" stroke="#233038" stroke-width="1.43" fill="none"/></svg>
<div class="t" style="left:644.5px;top:98.34px;font-size:20.50px;color:#BBBBBB;letter-spacing:-0.099px;">QuartzConfig.java</div>
<svg class="r" style="left:819.5px;top:102px" width="12" height="12" viewBox="0 0 12 12"><path d="M1 1 L11 11 M11 1 L1 11" stroke="#7A7C7E" stroke-width="1.3"/></svg>
<svg class="r" style="left:855.6px;top:97.8px" width="20.4" height="20.4" viewBox="0 0 20.4 20.4"><circle cx="10.20" cy="10.20" r="10.20" fill="#3A8BAD"/><path d="M12.95 7.96 A 3.67 3.67 0 1 0 12.95 12.44" stroke="#233038" stroke-width="1.43" fill="none"/></svg>
<div class="t" style="left:884.5px;top:98.34px;font-size:20.50px;color:#BBBBBB;letter-spacing:-0.369px;">CqSwBargainResultSchedul.java</div>
<svg class="r" style="left:1187.8px;top:102px" width="12" height="12" viewBox="0 0 12 12"><path d="M1 1 L11 11 M11 1 L1 11" stroke="#7A7C7E" stroke-width="1.3"/></svg>
<svg class="r" style="left:1222.2px;top:97.8px" width="20.4" height="20.4" viewBox="0 0 20.4 20.4"><circle cx="10.20" cy="10.20" r="10.20" fill="#3A8BAD"/><path d="M12.95 7.96 A 3.67 3.67 0 1 0 12.95 12.44" stroke="#233038" stroke-width="1.43" fill="none"/></svg>
<div class="t" style="left:1251.5px;top:98.34px;font-size:20.50px;color:#BBBBBB;letter-spacing:-0.264px;">CqSwIssueBulletinSchedul.java</div>
<svg class="r" style="left:1544.4px;top:102px" width="12" height="12" viewBox="0 0 12 12"><path d="M1 1 L11 11 M11 1 L1 11" stroke="#7A7C7E" stroke-width="1.3"/></svg>
<svg class="r" style="left:1578.8px;top:97.8px" width="20.4" height="20.4" viewBox="0 0 20.4 20.4"><circle cx="10.20" cy="10.20" r="10.20" fill="#3A8BAD"/><path d="M12.95 7.96 A 3.67 3.67 0 1 0 12.95 12.44" stroke="#233038" stroke-width="1.43" fill="none"/></svg>
<div class="t" style="left:1608.5px;top:98.34px;font-size:20.50px;color:#D9705F;letter-spacing:-0.064px;">CqGqProjectController.java</div>
<svg class="r" style="left:1869.0px;top:102px" width="12" height="12" viewBox="0 0 12 12"><path d="M1 1 L11 11 M11 1 L1 11" stroke="#7A7C7E" stroke-width="1.3"/></svg>
<svg class="r" style="left:1903.8px;top:97.8px" width="20.4" height="20.4" viewBox="0 0 20.4 20.4"><circle cx="10.20" cy="10.20" r="10.20" fill="#3A8BAD"/><path d="M12.95 7.96 A 3.67 3.67 0 1 0 12.95 12.44" stroke="#233038" stroke-width="1.43" fill="none"/></svg>
<div class="t" style="left:1932.4px;top:98.34px;font-size:20.50px;color:#BBBBBB;letter-spacing:-0.196px;">CqSwBargainResultController.java</div>
<svg class="r" style="left:2253.5px;top:102px" width="12" height="12" viewBox="0 0 12 12"><path d="M1 1 L11 11 M11 1 L1 11" stroke="#7A7C7E" stroke-width="1.3"/></svg>
<svg class="r" style="left:2289.4px;top:97.8px" width="20.4" height="20.4" viewBox="0 0 20.4 20.4"><circle cx="10.20" cy="10.20" r="10.20" fill="#3A8BAD"/><path d="M12.95 7.96 A 3.67 3.67 0 1 0 12.95 12.44" stroke="#233038" stroke-width="1.43" fill="none"/></svg>
<div class="t" style="left:2318.0px;top:98.34px;font-size:20.50px;color:#BBBBBB;letter-spacing:-0.433px;">RestHighLeve</div>
<div class="r" style="left:2418px;top:89px;width:33px;height:35px;background:linear-gradient(to right,rgba(60,63,65,0),#3C3F41 85%)"></div>
<div class="r" style="left:2451px;top:89px;width:76px;height:39px;background:#3C3F41;"></div>
<svg class="r" style="left:2460px;top:102px" width="16" height="10" viewBox="0 0 16 10"><path d="M1.5 1.5 L8 8 L14.5 1.5" stroke="#AFB1B3" stroke-width="1.8" fill="none"/></svg>
<svg class="r" style="left:2506px;top:97px" width="8" height="22" viewBox="0 0 8 22"><circle cx="4" cy="3" r="2.3" fill="#AFB1B3"/><circle cx="4" cy="11" r="2.3" fill="#AFB1B3"/><circle cx="4" cy="19" r="2.3" fill="#AFB1B3"/></svg>
<div class="r" style="left:600px;top:129px;width:1927px;height:1297px;background:#2B2B2B;"></div>
<div class="r" style="left:600px;top:129px;width:100px;height:1297px;background:#313335;"></div>
<div class="r" style="left:600px;top:129px;width:1px;height:1297px;background:#2B2B2B;"></div>
<div class="r" style="left:700px;top:327px;width:1827px;height:33px;background:#323232;"></div>
<div class="r" style="left:601px;top:327px;width:99px;height:33px;background:#333537;"></div>
<div class="r" style="left:699.3px;top:129px;width:1.5px;height:1297px;background:#555555;"></div>
<div class="r" style="left:2150px;top:129px;width:1px;height:1297px;background:#4D4D4D;"></div>
<div class="m" style="left:630.5px;top:137.5px;color:#606366">1</div>
<div class="m" style="left:630.5px;top:170.5px;color:#606366">2</div>
<div class="m" style="left:630.5px;top:203.5px;color:#606366">3</div>
<div class="m" style="left:630.5px;top:236.5px;color:#606366">4</div>
<div class="m" style="left:630.5px;top:269.5px;color:#606366">9</div>
<div class="m" style="left:618.5px;top:302.5px;color:#606366">10</div>
<div class="m" style="left:618.5px;top:335.5px;color:#A4A3A3">11</div>
<div class="m" style="left:618.5px;top:368.5px;color:#606366">12</div>
<div class="m" style="left:618.5px;top:401.5px;color:#606366">13</div>
<div class="m" style="left:618.5px;top:434.5px;color:#606366">14</div>
<div class="m" style="left:618.5px;top:467.5px;color:#606366">15</div>
<div class="m" style="left:618.5px;top:500.5px;color:#606366">16</div>
<div class="m" style="left:618.5px;top:533.5px;color:#606366">17</div>
<div class="m" style="left:618.5px;top:566.5px;color:#606366">18</div>
<div class="m" style="left:618.5px;top:599.5px;color:#606366">19</div>
<div class="m" style="left:618.5px;top:632.5px;color:#606366">20</div>
<div class="m" style="left:618.5px;top:665.5px;color:#606366">21</div>
<div class="m" style="left:618.5px;top:698.5px;color:#606366">22</div>
<div class="m" style="left:618.5px;top:731.5px;color:#606366">23</div>
<div class="m" style="left:618.5px;top:764.5px;color:#606366">24</div>
<div class="m" style="left:618.5px;top:797.5px;color:#606366">25</div>
<div class="m" style="left:618.5px;top:830.5px;color:#606366">26</div>
<div class="m" style="left:618.5px;top:863.5px;color:#606366">27</div>
<div class="m" style="left:618.5px;top:896.5px;color:#606366">28</div>
<div class="m" style="left:618.5px;top:929.5px;color:#606366">29</div>
<div class="m" style="left:618.5px;top:962.5px;color:#606366">30</div>
<div class="m" style="left:618.5px;top:995.5px;color:#606366">31</div>
<div class="m" style="left:618.5px;top:1028.5px;color:#606366">32</div>
<div class="m" style="left:618.5px;top:1061.5px;color:#606366">33</div>
<div class="m" style="left:618.5px;top:1094.5px;color:#606366">34</div>
<div class="m" style="left:618.5px;top:1127.5px;color:#606366">35</div>
<div class="m" style="left:618.5px;top:1160.5px;color:#606366">36</div>
<div class="m" style="left:618.5px;top:1193.5px;color:#606366">37</div>
<div class="m" style="left:618.5px;top:1226.5px;color:#606366">38</div>
<div class="m" style="left:618.5px;top:1259.5px;color:#606366">39</div>
<div class="m" style="left:618.5px;top:1292.5px;color:#606366">40</div>
<div class="m" style="left:618.5px;top:1325.5px;color:#606366">41</div>
<div class="m" style="left:618.5px;top:1358.5px;color:#606366">42</div>
<div class="m" style="left:618.5px;top:1391.5px;color:#606366">43</div>
<div class="m" style="left:708.9px;top:137.7px"><span style="color:#CC7832">package</span><span style="color:#A9B7C6"> com.trs.ggzyexchange.config</span><span style="color:#CC7832">;</span></div>
<div class="m" style="left:708.9px;top:236.7px"><span style="color:#CC7832">import</span></div>
<div class="r" style="left:793.9px;top:232px;width:34px;height:26px;background:#3B3B3B;"></div>
<div class="m" style="left:792.9px;top:236.7px"><span style="color:#A9A9A9">...</span></div>
<div class="m" style="left:708.9px;top:302.7px"><span style="color:#BBB529">@Configuration</span></div>
<div class="m" style="left:708.9px;top:335.7px"><span style="color:#CC7832">public</span><span style="color:#A9B7C6"> </span><span style="color:#CC7832">class</span></div>
<div class="r" style="left:864.9px;top:327px;width:144.0px;height:33px;background:#344134;"></div>
<div class="m" style="left:864.9px;top:335.7px"><span style="color:#A9B7C6">QuartzConfig</span><span style="color:#A9B7C6"> {</span></div>
<div class="m" style="left:756.9px;top:401.7px"><span style="color:#BBB529">@Value</span><span style="color:#A9B7C6">(&quot;</span></div>
<div class="r" style="left:851.9px;top:394px;width:169.0px;height:31px;background:#3B3B3B;"></div>
<div class="m" style="left:852.9px;top:401.7px"><span style="color:#A9A9A9">0 */10 * * * ?</span><span style="color:#A9B7C6">&quot;)</span></div>
<div class="m" style="left:756.9px;top:434.7px"><span style="color:#CC7832">private</span><span style="color:#A9B7C6"> String </span><span style="color:#9876AA">strSron</span><span style="color:#CC7832">;</span></div>
<svg class="r" style="left:972.9px;top:453px" width="49" height="3" viewBox="0 0 49 3"><polyline points="0.0,2.5 2.0,0.5 4.0,2.5 6.0,0.5 8.0,2.5 10.0,0.5 12.0,2.5 14.0,0.5 16.0,2.5 18.0,0.5 20.0,2.5 22.0,0.5 24.0,2.5 26.0,0.5 28.0,2.5 30.0,0.5 32.0,2.5 34.0,0.5 36.0,2.5 38.0,0.5 40.0,2.5 42.0,0.5 44.0,2.5 46.0,0.5 48.0,2.5" fill="none" stroke="#6A8759" stroke-width="1.1"/></svg>
<div class="m" style="left:768.9px;top:467.7px"><span style="color:#808080">//</span></div>
<div class="t" style="left:792.9px;top:467.0px;font-size:18.5px;color:#787878;line-height:1"><span style="display:inline-block;width:37.6px">创建</span></div>
<div class="m" style="left:830.5px;top:467.7px"><span style="color:#808080">Job</span></div>
<div class="t" style="left:866.5px;top:467.0px;font-size:18.5px;color:#787878;line-height:1"><span style="display:inline-block;width:37.6px">实例</span></div>
<div class="m" style="left:756.9px;top:500.7px"><span style="color:#BBB529">@Bean</span></div>
<div class="m" style="left:756.9px;top:533.7px"><span style="color:#CC7832">public</span><span style="color:#A9B7C6"> JobDetail </span><span style="color:#FFC66D">jobDetailCqSwBargainResult</span><span style="color:#A9B7C6">() {</span></div>
<div class="m" style="left:804.9px;top:566.7px"><span style="color:#CC7832">return</span><span style="color:#A9B7C6"> JobBuilder.</span><span style="color:#A9B7C6;font-style:italic">newJob</span><span style="color:#A9B7C6">(CqSwBargainResultSchedul.</span><span style="color:#CC7832">class</span><span style="color:#A9B7C6">).storeDurably().build()</span><span style="color:#CC7832">;</span></div>
<div class="m" style="left:756.9px;top:599.7px"><span style="color:#A9B7C6">}</span></div>
<div class="m" style="left:756.9px;top:632.7px"><span style="color:#808080">//</span></div>
<div class="t" style="left:780.9px;top:632.0px;font-size:18.5px;color:#787878;line-height:1">触发器</div>
<div class="m" style="left:756.9px;top:665.7px"><span style="color:#BBB529">@Bean</span></div>
<div class="m" style="left:756.9px;top:698.7px"><span style="color:#CC7832">public</span><span style="color:#A9B7C6"> Trigger </span><span style="color:#FFC66D">triggerCqSwBargainResult</span><span style="color:#A9B7C6">() {</span></div>
<div class="m" style="left:804.9px;top:731.7px"><span style="color:#CC7832">return</span><span style="color:#A9B7C6"> TriggerBuilder.</span><span style="color:#A9B7C6;font-style:italic">newTrigger</span><span style="color:#A9B7C6">()</span></div>
<div class="r" style="left:1214.5px;top:730.5px;width:235.0px;height:21.0px;background:#333333;border-radius:5px"></div>
<div class="t" style="left:1226.6px;top:729.96px;font-size:20.00px;color:#7E7E7E;">TriggerBuilder&lt;Trigger&gt;</div>
<div class="m" style="left:900.9px;top:764.7px"><span style="color:#A9B7C6">.withIdentity(</span></div>
<div class="r" style="left:1072.0px;top:759.0px;width:67.0px;height:27.0px;background:#333333;border-radius:5px"></div>
<div class="t" style="left:1080.1px;top:764.40px;font-size:18.30px;color:#7E7E7E;">name:</div>
<div class="m" style="left:1144.0px;top:764.7px"><span style="color:#6A8759">&quot;triggerCqSwBargainResult&quot;</span><span style="color:#CC7832">,</span></div>
<div class="r" style="left:1482.0px;top:759.0px;width:71.0px;height:27.0px;background:#333333;border-radius:5px"></div>
<div class="t" style="left:1491.6px;top:764.40px;font-size:18.30px;color:#7E7E7E;">group:</div>
<div class="m" style="left:1559.0px;top:764.7px"><span style="color:#6A8759">&quot;groupTriggerCqSwBargainResult&quot;</span><span style="color:#A9B7C6">)</span></div>
<div class="m" style="left:900.9px;top:797.7px"><span style="color:#A9B7C6">.withSchedule(CronScheduleBuilder.</span><span style="color:#A9B7C6;font-style:italic">cronSchedule</span><span style="color:#A9B7C6">(</span><span style="color:#CC7832">this</span><span style="color:#A9B7C6">.</span><span style="color:#9876AA">strSron</span><span style="color:#A9B7C6">))</span></div>
<div class="r" style="left:1634.7px;top:796.5px;width:275.7px;height:21.0px;background:#333333;border-radius:5px"></div>
<div class="t" style="left:1645.5px;top:795.96px;font-size:20.00px;color:#7E7E7E;">TriggerBuilder&lt;CronTrigger&gt;</div>
<div class="m" style="left:900.9px;top:830.7px"><span style="color:#A9B7C6">.forJob(jobDetailCqSwBargainResult())</span></div>
<div class="m" style="left:900.9px;top:863.7px"><span style="color:#A9B7C6">.build()</span><span style="color:#CC7832">;</span></div>
<div class="m" style="left:756.9px;top:896.7px"><span style="color:#A9B7C6">}</span></div>
<div class="m" style="left:756.9px;top:962.7px"><span style="color:#BBB529">@Bean</span></div>
<div class="m" style="left:756.9px;top:995.7px"><span style="color:#CC7832">public</span><span style="color:#A9B7C6"> JobDetail </span><span style="color:#FFC66D">jobDetailCqSwIssueBulletin</span><span style="color:#A9B7C6">() {</span></div>
<div class="m" style="left:804.9px;top:1028.7px"><span style="color:#CC7832">return</span><span style="color:#A9B7C6"> JobBuilder.</span><span style="color:#A9B7C6;font-style:italic">newJob</span><span style="color:#A9B7C6">(CqSwIssueBulletinSchedul.</span><span style="color:#CC7832">class</span><span style="color:#A9B7C6">).storeDurably().build()</span><span style="color:#CC7832">;</span></div>
<div class="m" style="left:756.9px;top:1061.7px"><span style="color:#A9B7C6">}</span></div>
<div class="m" style="left:756.9px;top:1094.7px"><span style="color:#808080">//</span></div>
<div class="t" style="left:780.9px;top:1094.0px;font-size:18.5px;color:#787878;line-height:1">触发器</div>
<div class="m" style="left:756.9px;top:1127.7px"><span style="color:#BBB529">@Bean</span></div>
<div class="m" style="left:756.9px;top:1160.7px"><span style="color:#CC7832">public</span><span style="color:#A9B7C6"> Trigger </span><span style="color:#FFC66D">triggerCqSwIssueBulletin</span><span style="color:#A9B7C6">() {</span></div>
<div class="m" style="left:804.9px;top:1193.7px"><span style="color:#CC7832">return</span><span style="color:#A9B7C6"> TriggerBuilder.</span><span style="color:#A9B7C6;font-style:italic">newTrigger</span><span style="color:#A9B7C6">()</span></div>
<div class="r" style="left:1214.5px;top:1192.5px;width:235.0px;height:21.0px;background:#333333;border-radius:5px"></div>
<div class="t" style="left:1226.6px;top:1191.96px;font-size:20.00px;color:#7E7E7E;">TriggerBuilder&lt;Trigger&gt;</div>
<div class="m" style="left:900.9px;top:1226.7px"><span style="color:#A9B7C6">.withIdentity(</span></div>
<div class="r" style="left:1072.0px;top:1221.0px;width:67.0px;height:27.0px;background:#333333;border-radius:5px"></div>
<div class="t" style="left:1080.1px;top:1226.40px;font-size:18.30px;color:#7E7E7E;">name:</div>
<div class="m" style="left:1144.0px;top:1226.7px"><span style="color:#6A8759">&quot;triggerCqSwIssueBulletin&quot;</span><span style="color:#CC7832">,</span></div>
<div class="r" style="left:1482.0px;top:1221.0px;width:71.0px;height:27.0px;background:#333333;border-radius:5px"></div>
<div class="t" style="left:1491.6px;top:1226.40px;font-size:18.30px;color:#7E7E7E;">group:</div>
<div class="m" style="left:1559.0px;top:1226.7px"><span style="color:#6A8759">&quot;groupTriggerCqSwIssueBulletin&quot;</span><span style="color:#A9B7C6">)</span></div>
<div class="m" style="left:900.9px;top:1259.7px"><span style="color:#A9B7C6">.withSchedule(CronScheduleBuilder.</span><span style="color:#A9B7C6;font-style:italic">cronSchedule</span><span style="color:#A9B7C6">(</span><span style="color:#CC7832">this</span><span style="color:#A9B7C6">.</span><span style="color:#9876AA">strSron</span><span style="color:#A9B7C6">))</span></div>
<div class="r" style="left:1634.7px;top:1258.5px;width:275.7px;height:21.0px;background:#333333;border-radius:5px"></div>
<div class="t" style="left:1645.5px;top:1257.96px;font-size:20.00px;color:#7E7E7E;">TriggerBuilder&lt;CronTrigger&gt;</div>
<div class="m" style="left:900.9px;top:1292.7px"><span style="color:#A9B7C6">.forJob(jobDetailCqSwIssueBulletin())</span></div>
<div class="m" style="left:900.9px;top:1325.7px"><span style="color:#A9B7C6">.build()</span><span style="color:#CC7832">;</span></div>
<div class="m" style="left:756.9px;top:1358.7px"><span style="color:#A9B7C6">}</span></div>
<div class="r" style="left:754.0px;top:558px;width:1.5px;height:33px;background:#393939;"></div>
<div class="r" style="left:754.0px;top:723px;width:1.5px;height:165px;background:#393939;"></div>
<div class="r" style="left:802.0px;top:756px;width:1.5px;height:132px;background:#393939;"></div>
<div class="r" style="left:754.0px;top:1020px;width:1.5px;height:33px;background:#393939;"></div>
<div class="r" style="left:754.0px;top:1185px;width:1.5px;height:165px;background:#393939;"></div>
<div class="r" style="left:802.0px;top:1218px;width:1.5px;height:132px;background:#393939;"></div>
<svg class="r" style="left:693px;top:238px" width="16" height="16" viewBox="0 0 16 16"><rect x="0.75" y="0.75" width="13.5" height="13.5" fill="#2B2B2B" stroke="#5F6163" stroke-width="1.5"/><path d="M3.5 7.5 H11.5 M7.5 3.5 V11.5" stroke="#5F6163" stroke-width="1.5"/></svg>
<svg class="r" style="left:691px;top:536px" width="18" height="20" viewBox="0 0 18 20"><path d="M1.5 0.75 H16.5 V11.5 L9 18.5 L1.5 11.5 Z" fill="#313335" stroke="#5F6163" stroke-width="1.5"/><path d="M5 7 H13" stroke="#5F6163" stroke-width="1.5"/></svg>
<svg class="r" style="left:691px;top:597.5px" width="18" height="20" viewBox="0 0 18 20"><path d="M1.5 19.25 H16.5 V8.5 L9 1.5 L1.5 8.5 Z" fill="#313335" stroke="#5F6163" stroke-width="1.5"/><path d="M5 13 H13" stroke="#5F6163" stroke-width="1.5"/></svg>
<svg class="r" style="left:691px;top:701px" width="18" height="20" viewBox="0 0 18 20"><path d="M1.5 0.75 H16.5 V11.5 L9 18.5 L1.5 11.5 Z" fill="#313335" stroke="#5F6163" stroke-width="1.5"/><path d="M5 7 H13" stroke="#5F6163" stroke-width="1.5"/></svg>
<svg class="r" style="left:691px;top:894.5px" width="18" height="20" viewBox="0 0 18 20"><path d="M1.5 19.25 H16.5 V8.5 L9 1.5 L1.5 8.5 Z" fill="#313335" stroke="#5F6163" stroke-width="1.5"/><path d="M5 13 H13" stroke="#5F6163" stroke-width="1.5"/></svg>
<svg class="r" style="left:691px;top:998px" width="18" height="20" viewBox="0 0 18 20"><path d="M1.5 0.75 H16.5 V11.5 L9 18.5 L1.5 11.5 Z" fill="#313335" stroke="#5F6163" stroke-width="1.5"/><path d="M5 7 H13" stroke="#5F6163" stroke-width="1.5"/></svg>
<svg class="r" style="left:691px;top:1059.5px" width="18" height="20" viewBox="0 0 18 20"><path d="M1.5 19.25 H16.5 V8.5 L9 1.5 L1.5 8.5 Z" fill="#313335" stroke="#5F6163" stroke-width="1.5"/><path d="M5 13 H13" stroke="#5F6163" stroke-width="1.5"/></svg>
<svg class="r" style="left:691px;top:1163px" width="18" height="20" viewBox="0 0 18 20"><path d="M1.5 0.75 H16.5 V11.5 L9 18.5 L1.5 11.5 Z" fill="#313335" stroke="#5F6163" stroke-width="1.5"/><path d="M5 7 H13" stroke="#5F6163" stroke-width="1.5"/></svg>
<svg class="r" style="left:691px;top:1356.5px" width="18" height="20" viewBox="0 0 18 20"><path d="M1.5 19.25 H16.5 V8.5 L9 1.5 L1.5 8.5 Z" fill="#313335" stroke="#5F6163" stroke-width="1.5"/><path d="M5 13 H13" stroke="#5F6163" stroke-width="1.5"/></svg>
<svg class="r" style="left:650px;top:492px" width="26" height="30" viewBox="0 0 26 30"><path d="M6.4 8.5 A10 10 0 0 1 19.6 23.5 Z" fill="#5A9B45"/><path d="M6.4 8.5 A10 10 0 0 0 2.9 18.3 L7.2 15.2 L9.5 17.5 L14 17.5 L13.2 15.6 Z" fill="#5A9B45"/><path d="M6 8 L20 24" stroke="#313335" stroke-width="1.6"/><path d="M2.6 21.5 L8 16.6 V19.6 H15 V23.4 H8 V26.4 Z" fill="#AFB1B3" stroke="#313335" stroke-width="1" stroke-linejoin="round"/></svg>
<svg class="r" style="left:650px;top:657px" width="26" height="30" viewBox="0 0 26 30"><path d="M6.4 8.5 A10 10 0 0 1 19.6 23.5 Z" fill="#5A9B45"/><path d="M6.4 8.5 A10 10 0 0 0 2.9 18.3 L7.2 15.2 L9.5 17.5 L14 17.5 L13.2 15.6 Z" fill="#5A9B45"/><path d="M6 8 L20 24" stroke="#313335" stroke-width="1.6"/><path d="M2.6 21.5 L8 16.6 V19.6 H15 V23.4 H8 V26.4 Z" fill="#AFB1B3" stroke="#313335" stroke-width="1" stroke-linejoin="round"/></svg>
<svg class="r" style="left:650px;top:954px" width="26" height="30" viewBox="0 0 26 30"><path d="M6.4 8.5 A10 10 0 0 1 19.6 23.5 Z" fill="#5A9B45"/><path d="M6.4 8.5 A10 10 0 0 0 2.9 18.3 L7.2 15.2 L9.5 17.5 L14 17.5 L13.2 15.6 Z" fill="#5A9B45"/><path d="M6 8 L20 24" stroke="#313335" stroke-width="1.6"/><path d="M2.6 21.5 L8 16.6 V19.6 H15 V23.4 H8 V26.4 Z" fill="#AFB1B3" stroke="#313335" stroke-width="1" stroke-linejoin="round"/></svg>
<svg class="r" style="left:650px;top:1119px" width="26" height="30" viewBox="0 0 26 30"><path d="M6.4 8.5 A10 10 0 0 1 19.6 23.5 Z" fill="#5A9B45"/><path d="M6.4 8.5 A10 10 0 0 0 2.9 18.3 L7.2 15.2 L9.5 17.5 L14 17.5 L13.2 15.6 Z" fill="#5A9B45"/><path d="M6 8 L20 24" stroke="#313335" stroke-width="1.6"/><path d="M2.6 21.5 L8 16.6 V19.6 H15 V23.4 H8 V26.4 Z" fill="#AFB1B3" stroke="#313335" stroke-width="1" stroke-linejoin="round"/></svg>
<div class="r" style="left:650px;top:1416px;width:26px;height:10px;overflow:hidden"><svg width="26" height="30" style="position:absolute;left:0;top:0"><path d="M6.4 8.5 A10 10 0 0 1 19.6 23.5 Z" fill="#5A9B45"/><path d="M6.4 8.5 A10 10 0 0 0 2.9 18.3 L7.2 15.2 L9.5 17.5 L14 17.5 L13.2 15.6 Z" fill="#5A9B45"/><path d="M6 8 L20 24" stroke="#313335" stroke-width="1.6"/><path d="M2.6 21.5 L8 16.6 V19.6 H15 V23.4 H8 V26.4 Z" fill="#AFB1B3" stroke="#313335" stroke-width="1" stroke-linejoin="round"/></svg></div>
<svg class="r" style="left:650px;top:327px" width="28" height="30" viewBox="0 0 28 30"><circle cx="12.5" cy="12.8" r="9.6" fill="#5A9B45"/><path d="M5.5 5.5 L12 12.5" stroke="#313335" stroke-width="1.6"/><circle cx="17.5" cy="17.2" r="7.6" fill="#313335"/><circle cx="17.5" cy="17.2" r="6.3" fill="#3A8BAD"/><path d="M19.6 15.2 A2.9 2.9 0 1 0 19.6 19.2" stroke="#1F2A30" stroke-width="1.4" fill="none"/><path d="M16 21 L23 21 L23 26 Z" fill="#C9CBCD" stroke="#313335" stroke-width="0.8"/></svg>
<svg class="r" style="left:723px;top:303px" width="17" height="24" viewBox="0 0 17 24"><circle cx="8.5" cy="8" r="7.2" fill="#F0A732"/><rect x="4.5" y="12" width="8" height="4" fill="#F0A732"/><path d="M4.5 18.5 H12.5 M5 21.5 H12" stroke="#C9CBCD" stroke-width="1.6"/></svg>
<svg class="r" style="left:2399px;top:141px" width="19" height="19" viewBox="0 0 19 19"><path d="M1.5 7.5 L6.5 12.5 L16.5 2" stroke="#499C54" stroke-width="3" fill="none"/><path d="M1 18 L4 14.5 L7 17.5 L10 14.5 L13 17.5 L16 14.5" stroke="#499C54" stroke-width="1.2" fill="none"/></svg>
<div class="t" style="left:2424.3px;top:138.86px;font-size:20.00px;color:#BBBBBB;letter-spacing:-1.335px;">198</div>
<svg class="r" style="left:2471px;top:143px" width="14" height="9" viewBox="0 0 14 9"><path d="M1 8 L7 2 L13 8" stroke="#AFB1B3" stroke-width="1.8" fill="none"/></svg>
<svg class="r" style="left:2503px;top:143px" width="14" height="9" viewBox="0 0 14 9"><path d="M1 1 L7 7 L13 1" stroke="#AFB1B3" stroke-width="1.8" fill="none"/></svg>
<div class="r" style="left:2514px;top:170px;width:12px;height:144px;background:#464748;"></div>
<div class="r" style="left:2507px;top:189px;width:20px;height:3px;background:#1F7A1F;"></div>
<div class="r" style="left:600px;top:1426px;width:1927px;height:2px;background:#3A3C3E;"></div>
<div class="r" style="left:600px;top:1428px;width:1927px;height:36px;background:#323335;"></div>
<div class="t" style="left:714.5px;top:1436.84px;font-size:20.50px;color:#BBBBBB;letter-spacing:-0.025px;">QuartzConfig</div>
<div class="r" style="left:2527px;top:89px;width:27px;height:1375px;background:#3C3F41;"></div>
<div class="r" style="left:2527px;top:89px;width:2px;height:1375px;background:#303234;"></div>
<div class="t" style="left:2534px;top:95px;font-size:27px;font-weight:bold;font-style:italic;color:#AFB1B3">m</div>
<div class="t" style="left:2516.1px;top:144.5px;width:49.9px;height:20.0px;font-size:16.63px;color:#BBBBBB;line-height:20.0px;text-align:center;transform:rotate(90deg);transform-origin:50% 50%">Maven</div>
<svg class="r" style="left:2532px;top:210px" width="20" height="21" viewBox="0 0 20 21"><ellipse cx="10" cy="3.5" rx="8.5" ry="3" fill="#AFB1B3"/><path d="M1.5 6.5 Q10 11 18.5 6.5 V9.5 Q10 14 1.5 9.5 Z M1.5 12 Q10 16.5 18.5 12 V15 Q10 19.5 1.5 15 Z" fill="#AFB1B3"/></svg>
<div class="t" style="left:2505.8px;top:263.3px;width:70.3px;height:19.7px;font-size:16.42px;color:#BBBBBB;line-height:19.7px;text-align:center;transform:rotate(90deg);transform-origin:50% 50%">Database</div>
<svg class="r" style="left:0;top:0" width="2554" height="1470"><path d="M229.9 424.0 C238.1 424.3 257.9 425.3 279.3 425.6 C300.7 425.9 335.2 425.9 358.3 426.0 C381.4 426.1 397.8 426.2 417.6 426.0 C437.4 425.8 460.5 425.4 477.0 425.0 C493.5 424.6 503.6 424.3 516.4 423.6 C529.2 422.9 544.8 422.9 554.0 421.0 C563.2 419.1 566.2 415.1 571.8 412.2 C577.4 409.2 583.3 406.8 587.6 403.3 C591.9 399.8 595.0 396.2 597.5 391.4 C600.0 386.6 600.9 381.7 602.4 374.6 C603.9 367.5 605.1 354.9 606.4 349.0 C607.7 343.1 607.2 343.3 610.3 339.0 C613.4 334.7 620.3 328.0 625.1 323.2 C629.9 318.4 635.0 315.0 639.0 310.4 C643.0 305.8 645.3 299.7 648.9 295.6 C652.5 291.5 657.8 287.5 660.7 285.7 C663.7 283.9 663.6 285.8 666.6 284.7 C669.6 283.6 676.2 279.5 678.5 278.8 C680.8 278.1 680.3 275.4 680.5 280.5 C680.7 285.6 680.2 296.3 679.5 309.4 C678.8 322.4 677.3 337.0 676.5 358.8 C675.7 380.6 674.8 416.7 674.5 440.0 C674.2 463.3 674.4 474.6 674.9 498.7 C675.4 522.8 676.9 555.9 677.7 584.5 C678.6 613.1 679.0 651.4 680.0 670.3 C681.0 689.2 681.5 686.3 683.5 697.8 C685.5 709.2 689.0 725.3 692.1 739.0 C695.2 752.7 699.8 768.8 702.4 780.2 C705.0 791.7 706.3 794.5 707.6 807.7 C708.9 820.9 709.1 838.8 710.0 859.2 C710.9 879.6 711.5 909.1 712.7 930.0 C713.9 950.9 716.4 962.0 717.4 984.5 C718.4 1007.0 719.3 1040.8 719.0 1065.0 C718.7 1089.2 717.0 1108.2 715.8 1129.7 C714.6 1151.2 712.4 1167.3 711.6 1194.2 C710.8 1221.1 709.8 1271.1 711.0 1291.0 C712.2 1310.9 717.0 1307.0 719.0 1313.5 C721.0 1320.0 722.3 1322.7 723.2 1329.7 C724.1 1336.7 723.6 1348.8 724.5 1355.5 C725.4 1362.2 726.9 1366.8 728.7 1370.0 C730.5 1373.2 734.1 1374.0 735.2 1374.8" fill="none" stroke="#E81C1C" stroke-width="5.5" stroke-linecap="round" stroke-linejoin="round"/></svg>
</body></html>
